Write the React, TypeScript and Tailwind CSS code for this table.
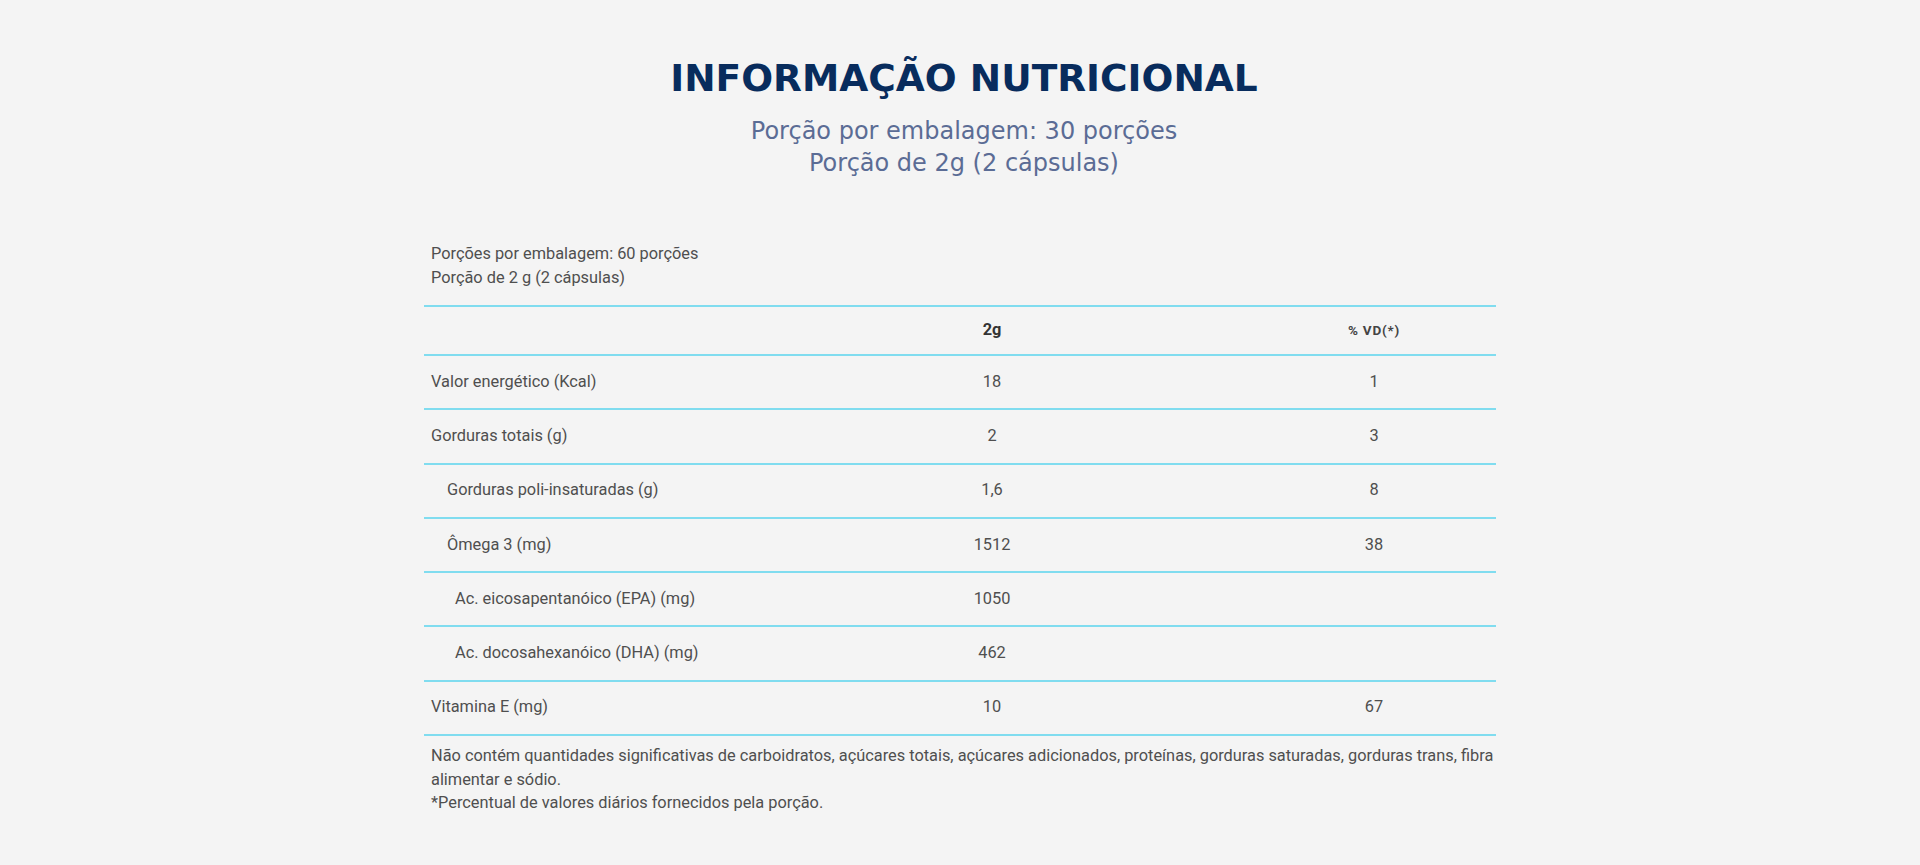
type Row = {
  label: string
  amount: string
  vd?: string
  level?: 0 | 1 | 2
}

const rows: Row[] = [
  { label: 'Valor energético (Kcal)', amount: '18', vd: '1' },
  { label: 'Gorduras totais (g)', amount: '2', vd: '3' },
  { label: 'Gorduras poli-insaturadas (g)', amount: '1,6', vd: '8', level: 1 },
  { label: 'Ômega 3 (mg)', amount: '1512', vd: '38', level: 1 },
  { label: 'Ac. eicosapentanóico (EPA) (mg)', amount: '1050', level: 2 },
  { label: 'Ac. docosahexanóico (DHA) (mg)', amount: '462', level: 2 },
  { label: 'Vitamina E (mg)', amount: '10', vd: '67' },
]

const indent = {
  0: 'pl-[7px]',
  1: 'pl-[23px]',
  2: 'pl-[31px]',
}

export default function App() {
  return (
    <div className="min-h-screen bg-[#f4f4f4] font-['Roboto',sans-serif]">
      <header className="pl-[8px] pt-[56px] text-center">
        <h1 className="font-['DejaVu_Sans',sans-serif] text-[37.5px] font-bold leading-[44px] text-[#082c5d]">
          INFORMAÇÃO NUTRICIONAL
        </h1>
        <p className="mt-[15px] font-['DejaVu_Sans',sans-serif] text-[24px] leading-[32px] text-[#5b6c95]">
          Porção por embalagem: 30 porções
          <br />
          Porção de 2g (2 cápsulas)
        </p>
      </header>

      <section className="mx-auto mt-[62.5px] w-[1072px] text-[16.35px] text-[#4f4f4f]">
        <div className="px-[7px] leading-[24px]">
          <p>Porções por embalagem: 60 porções</p>
          <p>Porção de 2 g (2 cápsulas)</p>
        </div>

        <div className="mt-[15.5px] border-t-2 border-[#80dcef]">
          <div className="grid h-[49px] grid-cols-[308px_520px_244px] items-center border-b-2 border-[#80dcef]">
            <span />
            <span className="text-center font-bold text-[#333]">2g</span>
            <span className="text-center text-[13.5px] font-bold tracking-[0.8px] text-[#444]">
              % VD(*)
            </span>
          </div>

          {rows.map((row) => (
            <div
              key={row.label}
              className="grid h-[54.25px] grid-cols-[308px_520px_244px] items-center border-b-2 border-[#80dcef]"
            >
              <span className={indent[row.level ?? 0]}>{row.label}</span>
              <span className="text-center">{row.amount}</span>
              <span className="text-center">{row.vd}</span>
            </div>
          ))}
        </div>

        <div className="pl-[7px] pt-[8.5px] leading-[23.5px]">
          <p className="whitespace-nowrap">
            Não contém quantidades significativas de carboidratos, açúcares totais, açúcares
            adicionados, proteínas, gorduras saturadas, gorduras trans, fibra
          </p>
          <p>alimentar e sódio.</p>
          <p>*Percentual de valores diários fornecidos pela porção.</p>
        </div>
      </section>
    </div>
  )
}
